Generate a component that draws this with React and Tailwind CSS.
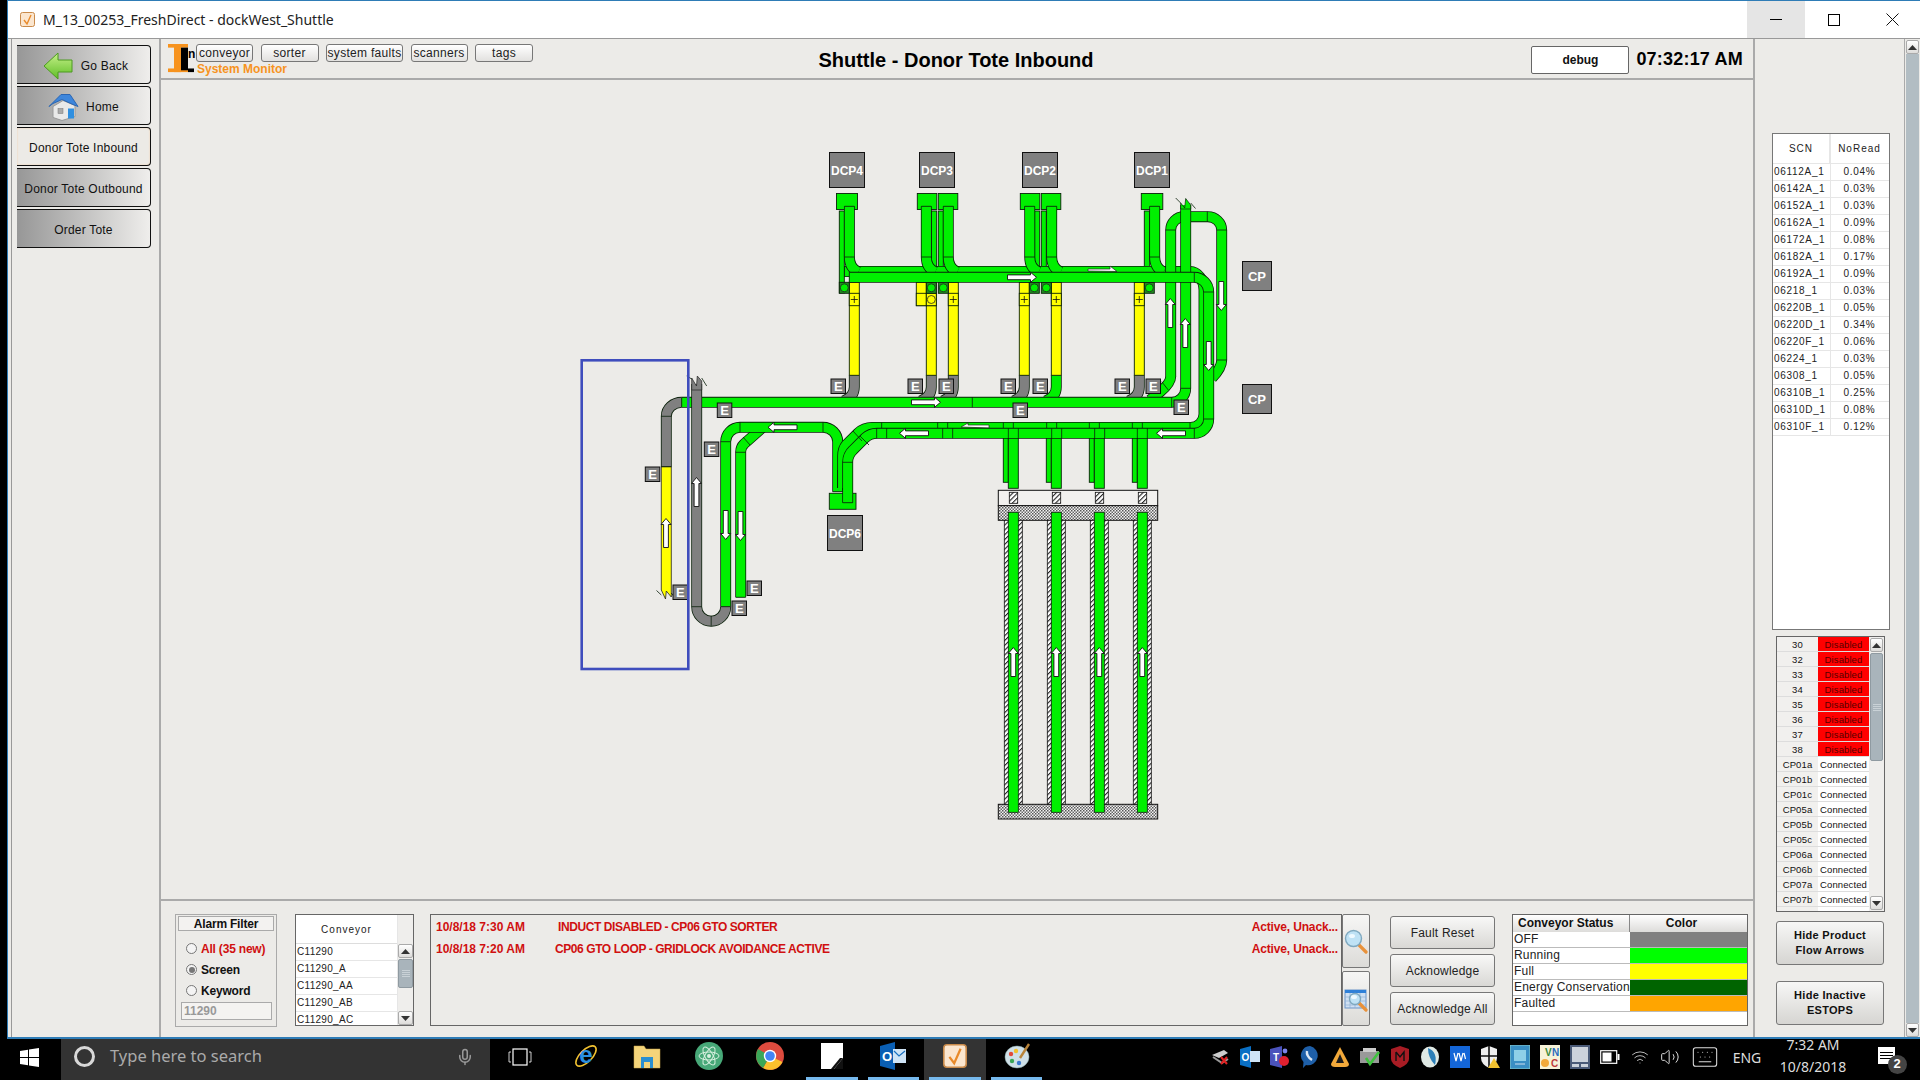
import { Mic, Wifi, Volume2, Keyboard } from 'lucide-react'

const GREEN = '#00f000'
const GRAY = '#808080'
const YELLOW = '#ffff00'
const DARK = '#228b22'

const scanRows = [
  ['06112A_1', '0.04%'], ['06142A_1', '0.03%'], ['06152A_1', '0.03%'], ['06162A_1', '0.09%'],
  ['06172A_1', '0.08%'], ['06182A_1', '0.17%'], ['06192A_1', '0.09%'], ['06218_1', '0.03%'],
  ['06220B_1', '0.05%'], ['06220D_1', '0.34%'], ['06220F_1', '0.06%'], ['06224_1', '0.03%'],
  ['06308_1', '0.05%'], ['06310B_1', '0.25%'], ['06310D_1', '0.08%'], ['06310F_1', '0.12%'],
]
const disabledRows = ['30', '32', '33', '34', '35', '36', '37', '38']
const connectedRows = ['CP01a', 'CP01b', 'CP01c', 'CP05a', 'CP05b', 'CP05c', 'CP06a', 'CP06b', 'CP07a', 'CP07b', 'CP08a']
const statusRows = [
  ['OFF', 'bg-[#808080]'], ['Running', 'bg-[#00ff00]'], ['Full', 'bg-[#ffff00]'],
  ['Energy Conservation', 'bg-[#006400]'], ['Faulted', 'bg-[#ffa500]'],
]

// ---- conveyor drawing helpers ----
function Belt({ d, color = GREEN, w = 10 }) {
  return (
    <>
      <path d={d} fill="none" stroke="#0a200a" strokeWidth={w + 0.9} />
      <path d={d} fill="none" stroke={color} strokeWidth={w - 0.7} />
    </>
  )
}

function Box({ x, y, w, h, fill = GREEN }) {
  return <rect x={x} y={y} width={w} height={h} fill={fill} stroke="#0a200a" strokeWidth="0.9" />
}

function Arrow({ x, y, rot = 0, len = 29 }) {
  const h = len / 2
  return (
    <polygon
      transform={`translate(${x} ${y}) rotate(${rot})`}
      points={`${-h},-2.4 ${h - 6},-2.4 ${h - 6},-5 ${h},0 ${h - 6},5 ${h - 6},2.4 ${-h},2.4`}
      fill="#fff"
      stroke="#111"
      strokeWidth="0.9"
    />
  )
}

function EBox({ x, y }) {
  return (
    <g>
      <rect x={x} y={y} width="14.5" height="14.5" fill={GRAY} stroke="#111" strokeWidth="1" />
      <text x={x + 7.25} y={y + 12} textAnchor="middle" fontSize="13" fill="#fff" fontWeight="700">E</text>
    </g>
  )
}

function Station({ x, y, label, size = 35 }) {
  return (
    <g>
      <rect x={x} y={y} width={size} height={size} fill={GRAY} stroke="#111" strokeWidth="1" />
      <text x={x + size / 2} y={y + size / 2 + 4.5} textAnchor="middle" fontSize={size === 35 ? 12 : 13} fill="#fff" fontWeight="700">{label}</text>
    </g>
  )
}

function Seps({ lines }) {
  return lines.map(([a, b, c, d], i) => (
    <line key={i} x1={a} y1={b} x2={c} y2={d} stroke="#0a200a" strokeWidth="0.8" />
  ))
}

const dcpCols = [
  { cx: 849.4, head: [836.5, 21], back: [839.3, 5] },
  { cx: 926.3, head: [917.3, 19.5], back: [931.3, 5.4] },
  { cx: 948.3, head: [938.3, 19.5], back: [938.3, 5] },
  { cx: 1029.7, head: [1020.3, 19.5], back: [1034.7, 5] },
  { cx: 1051.7, head: [1041.3, 19.5], back: [1041.3, 5] },
  { cx: 1154.7, head: [1141.3, 21.5], back: [1144.3, 5.4] },
]
const yellowCols = [854.3, 931.3, 953.3, 1024.3, 1056.3, 1139.3]
const shuttleCols = [1013.3, 1056.3, 1099.3, 1142.3]

function Diagram() {
  return (
    <svg viewBox="161 80 1594 819" className="block w-[1594px] h-[819px]">
      <defs>
        <pattern id="hatch" width="3.4" height="3.4" patternUnits="userSpaceOnUse" patternTransform="rotate(45)">
          <rect width="3.4" height="3.4" fill="#fff" />
          <rect width="1.1" height="3.4" fill="#222" />
        </pattern>
        <pattern id="dither" width="3" height="3" patternUnits="userSpaceOnUse">
          <rect width="3" height="3" fill="#f4f4f4" />
          <rect width="1.5" height="1.5" fill="#555" />
          <rect x="1.5" y="1.5" width="1.5" height="1.5" fill="#666" />
        </pattern>
      </defs>

      {/* far left loop */}
      <Belt d="M666.3 466.7 V416.3 A15.4 14 0 0 1 681.7 402.3" color={GRAY} />
      <path d="M661.3 466.7 H671.3 V590 L671.3 597 L666.3 591 L665.5 599 L661.3 590 Z" fill={YELLOW} stroke="#222" strokeWidth="0.8" />
      <Seps lines={[[656.5, 590.5, 661.3, 595], [671.3, 593, 676.5, 600], [661, 416.3, 671.6, 416.3], [661, 466.7, 671.6, 466.7]]} />

      {/* back columns for the lower rails */}
      <Belt d="M740.7 597.3 V452.3 A11 11 0 0 1 744 444 L762 428" />
      <Seps lines={[[735.7, 597.3, 745.7, 597.3], [735.7, 452.3, 745.7, 452.3], [743, 437, 750, 445]]} />
      <Belt d="M725.7 606.7 V441.7 A14.4 14.4 0 0 1 740 427.3 H823 A14.7 14.4 0 0 1 837.7 441.7 V491.7" />
      <Seps lines={[[720.7, 441.7, 730.7, 441.7], [740, 422.3, 740, 432.3], [823, 422.3, 823, 432.3], [832.7, 491.7, 842.7, 491.7]]} />
      <Arrow x={782.5} y={427.3} rot={180} />
      <Arrow x={725.7} y={525} rot={90} />
      <Arrow x={740.5} y={526} rot={90} />

      {/* back of the top rails */}
      {dcpCols.map((c, i) => (
        <Box key={i} x={c.back[0]} y="211" w={c.back[1]} h={i === 0 ? 82 : 58} />
      ))}
      <Belt d="M844.5 271.5 H1190 A14 19 0 0 1 1204 290 V414 A13.5 13.5 0 0 1 1190.5 427.5 H872 Q864 427.5 858 433 L846 445 Q842.7 449 842.7 456 V488" />
      <Seps lines={[
        [844.5, 266, 844.5, 277],
        ...[245, 413, 443, 610, 640, 740, 770, 868, 898, 997, 1027, 1170].map((z) => [800 + z / 3, 422.6, 800 + z / 3, 432]),
      ]} />
      <polygon points="1088,271 1088,269 1110,269 1110,266 1117,271.5" fill="#fff" stroke="#222" strokeWidth="0.7" />
      <polygon points="961,427 968,423 968,425 989,425 989,428" fill="#fff" stroke="#222" strokeWidth="0.7" />

      {/* DCP heads and drop columns */}
      {dcpCols.map((c, i) => (
        <g key={i}>
          <Box x={c.head[0]} y="193.5" w={c.head[1]} h="16" />
          <Belt d={`M${c.cx} 206.3 V257 Q${c.cx} 268 ${c.cx + 9} 272`} />
          <Seps lines={[[c.cx - 5, 206.3, c.cx + 5, 206.3], [c.cx - 5, 257, c.cx + 5, 257]]} />
        </g>
      ))}

      {/* yellow drops into the main rail */}
      {yellowCols.map((cx, i) => (
        <g key={i}>
          <Belt d={`M${cx} 375.3 V387 Q${cx} 397 ${cx - 11} 401`} color={i === 4 ? GREEN : GRAY} />
          <Box x={cx - 5} y="282.3" w="10" h="93" fill={YELLOW} />
          <Box x={cx - 5} y="293.3" w="10" h="12.4" fill={YELLOW} />
          <path d={`M${cx - 3.5} 299.5 H${cx + 3.5} M${cx} 296 V303`} stroke="#111" strokeWidth="0.8" />
        </g>
      ))}

      {/* photo eye blocks */}
      <Box x="916.3" y="282.3" w="10" h="23.4" fill={YELLOW} />
      <Box x="916.3" y="293.3" w="10" h="12.4" fill={YELLOW} />
      <Box x="926.3" y="293.3" w="10" h="12.4" fill={YELLOW} />
      <circle cx="931.3" cy="299.5" r="4" fill={YELLOW} stroke="#222" strokeWidth="0.8" />
      {[839.3, 926.3, 938.3, 1029.3, 1041.3, 1144.3].map((x) => (
        <g key={x}>
          <Box x={x} y="282.3" w="10" h="11" fill={DARK} />
          <circle cx={x + 5} cy="287.8" r="4" fill={GREEN} stroke="#222" strokeWidth="0.8" />
        </g>
      ))}

      {/* right hand loop */}
      <Belt d="M1221.7 360 Q1221.7 368 1212 378 M1170.7 376.7 Q1170.7 383 1160 392 L1150 400" />
      <Belt d="M1170.7 377 V230 A13.3 13.3 0 0 1 1184 216.7 H1207.7 A14 13.3 0 0 1 1221.7 230 V360" />
      <Seps lines={[[1165.7, 230, 1175.7, 230], [1207.3, 211.7, 1207.3, 221.7], [1216.7, 230, 1226.7, 230], [1216.7, 360, 1226.7, 360], [1161.7, 381.7, 1168.3, 390]]} />
      <Arrow x={1221.3} y={296} rot={90} />

      {/* main rail and the tall column */}
      <Belt d="M681.7 402.3 H1171.7 A14 14 0 0 0 1185.7 388.3 V205" />
      <path d="M1180.7 207 V203 L1184.7 208 L1185.7 198.5 L1190.7 205 V209 H1180.7 Z" fill={GREEN} stroke="#0a200a" strokeWidth="0.7" />
      <Seps lines={[[681.7, 397.3, 681.7, 407.3], [972.3, 397.3, 972.3, 407.3], [1171.7, 397.3, 1171.7, 407.3], [1180.7, 388.3, 1190.7, 388.3], [1175.7, 198, 1180.7, 203], [1190.7, 203, 1195.5, 208.5]]} />
      <Arrow x={926} y={402.3} />
      <Arrow x={1170.3} y={313} rot={-90} />
      <Arrow x={1185.3} y={333} rot={-90} />

      {/* lower shuttle drops */}
      {shuttleCols.map((cx) => (
        <g key={cx}>
          <Box x={cx - 10} y="436" w="5" h="46.3" />
          <Box x={cx - 5} y="436" w="10" h="52.3" />
        </g>
      ))}

      {/* front rail */}
      <Box x="829.3" y="493.3" w="26.7" h="16" />
      <Belt d="M842.7 470 V488" />
      <Belt d="M849.3 277.3 H1194 A14.7 14.7 0 0 1 1208.7 292 V419 A14.3 14.3 0 0 1 1194.4 433.3 H877 Q870 433.3 865 438 L853 450 Q847.7 455 847.7 462 V502.7" />
      <Seps lines={[
        [849.3, 272.3, 849.3, 282.3], [1194.3, 272.3, 1194.3, 282.3], [1203.7, 292, 1213.7, 292], [1203.7, 419, 1213.7, 419],
        [1194.3, 428.3, 1194.3, 438.3], [842.7, 462.3, 852.7, 462.3], [842.7, 502.7, 852.7, 502.7],
        [860, 436, 869, 445], [853, 431, 862, 441],
        ...[230, 260, 428, 458, 625, 655, 755, 785, 884, 914, 1012, 1042].map((z) => [800 + z / 3, 428.3, 800 + z / 3, 438.3]),
      ]} />
      <Arrow x={1022} y={277.3} />
      <Arrow x={1208.7} y={356} rot={90} />
      <Arrow x={1171} y={433.3} rot={180} />
      <Arrow x={914} y={433.3} rot={180} />

      {/* gray U-turn over the main rail */}
      <Belt d="M696.7 384 V606.7 A14.5 14.5 0 0 0 725.7 606.7" color={GRAY} />
      <path d="M691.7 378 L696.5 386 L697.3 376 L701.7 381 V390 H691.7 Z" fill={GRAY} stroke="#222" strokeWidth="0.7" />
      <Seps lines={[[686.7, 376, 691.7, 379], [701.7, 378, 706.7, 386], [691.7, 606.7, 701.7, 606.7], [720.7, 606.7, 730.7, 606.7], [711.2, 615.7, 711.2, 625.7]]} />
      <Arrow x={696.5} y={492} rot={-90} />
      <Arrow x={666} y={533} rot={-90} />

      {/* shuttle aisles */}
      <rect x="998.3" y="490.3" width="159.4" height="15.4" fill="#f2f1ef" stroke="#111" strokeWidth="1" />
      <rect x="998.3" y="505.7" width="159.4" height="14.6" fill="url(#dither)" stroke="#111" strokeWidth="1" />
      <rect x="998.3" y="804.3" width="159.4" height="14.7" fill="url(#dither)" stroke="#111" strokeWidth="1" />
      {shuttleCols.map((cx) => (
        <g key={cx}>
          <rect x={cx - 4} y="492.3" width="8.4" height="11" fill="url(#hatch)" stroke="#111" strokeWidth="0.8" />
          <rect x={cx - 9} y="520.3" width="18" height="284" fill="url(#hatch)" stroke="#111" strokeWidth="0.8" />
          <rect x={cx - 5} y="512.3" width="10" height="300" fill={GREEN} stroke="#0a200a" strokeWidth="0.8" />
          <Arrow x={cx} y={662} rot={-90} />
        </g>
      ))}

      {/* stations */}
      <Station x={829.5} y={152.5} label="DCP4" />
      <Station x={919.5} y={152.5} label="DCP3" />
      <Station x={1022.5} y={152.5} label="DCP2" />
      <Station x={1134.5} y={152.5} label="DCP1" />
      <Station x={827.5} y={515.5} label="DCP6" />
      <Station x={1242.5} y={261.5} label="CP" size={29} />
      <Station x={1242.5} y={384.5} label="CP" size={29} />

      {[
        [831, 379], [908, 379], [939, 379], [1001, 379], [1033, 379], [1115, 379], [1146, 379], [1013, 403], [1174, 400],
        [645.3, 467], [673, 585], [717.3, 403], [704.3, 442], [747, 581], [732, 601],
      ].map(([x, y]) => (
        <EBox key={`${x}-${y}`} x={x} y={y} />
      ))}

      {/* selection window */}
      <rect x="581.7" y="360.3" width="106.6" height="308.7" fill="none" stroke="#3f4dbd" strokeWidth="2.6" />
    </svg>
  )
}

// ---- small widgets ----
function Tri({ up, className = 'fill-[#333]' }) {
  return (
    <svg width="9" height="5" viewBox="0 0 9 5" className={className}>
      <polygon points={up ? '4.5,0 9,5 0,5' : '0,0 9,0 4.5,5'} />
    </svg>
  )
}

function ScrollBtn({ up, h = 'h-[14px]' }) {
  return (
    <div className={`${h} w-full shrink-0 flex items-center justify-center bg-linear-to-b from-white to-[#dddcda] border border-[#aaa] rounded-[2px]`}>
      <Tri up={up} />
    </div>
  )
}

function Thumb({ h }) {
  return (
    <div className={`${h} mt-[1px] w-full shrink-0 rounded-[2px] bg-[#a9b4bb] border border-[#8f9aa1] flex flex-col items-center justify-center gap-[1px]`}>
      <div className="w-[8px] h-[1px] bg-[#c9d1d6]" />
      <div className="w-[8px] h-[1px] bg-[#c9d1d6]" />
      <div className="w-[8px] h-[1px] bg-[#c9d1d6]" />
      <div className="w-[8px] h-[1px] bg-[#c9d1d6]" />
    </div>
  )
}

function NavButton({ children, active }) {
  return (
    <div className={`h-[39px] w-[134px] pt-[2px] flex items-center justify-center gap-[7px] rounded-r-[4px] text-[12px] tracking-[0.2px] text-[#111] ${active ? 'bg-[#eceae6] border-y border-r border-y-[#111] border-r-[#111] shadow-[inset_0_0_2px_#f4cfa8]' : 'bg-linear-to-r from-[#979797] to-[#efeeec] border-y border-r border-[#111]'}`}>
      {children}
    </div>
  )
}

function TopTab({ label, w }) {
  return (
    <div className={`${w} h-[18px] flex items-center justify-center rounded-[3px] border border-[#777] bg-linear-to-b from-white to-[#e2e1df] text-[12px] tracking-[0.3px] text-[#222]`}>
      {label}
    </div>
  )
}

function Radio({ on, label, red }) {
  return (
    <div className="h-[21px] flex items-center gap-[4px]">
      <span className="w-[11px] h-[11px] rounded-full border border-[#777] bg-[#f4f4f4] flex items-center justify-center">
        {on && <span className="w-[6px] h-[6px] rounded-full bg-[#777]" />}
      </span>
      <span className={`text-[12px] font-bold tracking-[-0.2px] ${red ? 'text-[#d01010]' : 'text-[#111]'}`}>{label}</span>
    </div>
  )
}

function ActionButton({ label }) {
  return (
    <div className="h-[33px] w-[105px] flex items-center justify-center rounded-[3px] border border-[#777] bg-linear-to-b from-[#f8f8f7] to-[#d9d8d5] text-[12px] tracking-[0.2px] text-[#222]">
      {label}
    </div>
  )
}

function HideButton({ children }) {
  return (
    <div className="h-[44px] w-[108px] flex items-center justify-center text-center rounded-[3px] border border-[#777] bg-linear-to-b from-[#f7f7f6] to-[#d6d5d2] text-[11px] leading-[15px] tracking-[0.3px] font-bold text-[#111]">
      {children}
    </div>
  )
}

function Magnifier({ calendar }) {
  return (
    <svg width="24" height="26" viewBox="0 0 24 26">
      {calendar && (
        <g>
          <rect x="1" y="4" width="21" height="18" fill="#cfe0f2" stroke="#6a94c8" />
          <rect x="1" y="4" width="21" height="3" fill="#2f80d8" />
          <path d="M1 11H22M1 15H22M1 19H22M6 7V22M11 7V22M16 7V22" stroke="#8fb0d6" strokeWidth="0.7" />
        </g>
      )}
      <line x1={calendar ? 15 : 14} y1={calendar ? 17 : 16} x2="22" y2="24" stroke="#e8913a" strokeWidth="3.2" strokeLinecap="round" />
      <circle cx={calendar ? 11 : 9.5} cy={calendar ? 13 : 10.5} r={calendar ? 5.5 : 8} fill="#bfe2f5" stroke="#7fa8bf" strokeWidth="1.4" />
      <ellipse cx={calendar ? 10 : 8} cy={calendar ? 11 : 8} rx="3" ry="2" fill="#eef9ff" />
    </svg>
  )
}

function GoBackIcon() {
  return (
    <svg width="30" height="28" viewBox="0 0 30 28" className="ml-[4px]">
      <defs>
        <linearGradient id="back" x1="0" y1="0" x2="0" y2="1">
          <stop offset="0" stopColor="#c6f08a" />
          <stop offset="1" stopColor="#5fbe26" />
        </linearGradient>
      </defs>
      <polygon points="1,14 15,1 15,8 29,8 29,20 15,20 15,27" fill="url(#back)" stroke="#4d9a20" />
    </svg>
  )
}

function HomeIcon() {
  return (
    <svg width="31" height="28" viewBox="0 0 31 27">
      <polygon points="5,13 5,24 14,27 27,23 27,12 15,7" fill="#e9e9e9" stroke="#999" />
      <polygon points="1,13 13,1 22,1 30,13 25,11 14,6 5,10" fill="#3d86dc" stroke="#2a66b4" />
      <rect x="20" y="15" width="6" height="10" fill="#2f8fe0" />
      <rect x="10" y="15" width="5" height="5" fill="#aaa" stroke="#777" strokeWidth="0.5" />
    </svg>
  )
}

function AppIcon({ size = 15 }) {
  return (
    <svg width={size} height={size} viewBox="0 0 15 15">
      <rect x="0.5" y="0.5" width="14" height="14" rx="2" fill="#fbe6cf" stroke="#c98a4a" />
      <path d="M4 8 L7 12 L11 3" fill="none" stroke="#e98a2a" strokeWidth="1.4" />
    </svg>
  )
}

function TaskApp({ children, open, active }) {
  return (
    <div className={`w-[61.5px] h-full flex flex-col ${active ? 'bg-[#333]' : ''}`}>
      <div className="flex-1 flex items-center justify-center pb-[5px]">{children}</div>
      <div className={`h-[3px] mx-[5px] ${open ? 'bg-[#76b9ed]' : ''}`} />
    </div>
  )
}

function Tray({ children }) {
  return <div className="w-[30px] flex items-center justify-center pb-[5px]">{children}</div>
}

function Taskbar() {
  return (
    <div className="h-[41px] bg-black flex items-stretch overflow-hidden text-white">
      <div className="w-[61px] flex items-center justify-center pr-[2px] pb-[5px]">
        <svg width="19" height="19" viewBox="0 0 19 19" fill="#fff">
          <polygon points="0,3 8,1.8 8,9 0,9" /><polygon points="9,1.6 19,0 19,9 9,9" />
          <polygon points="0,10 8,10 8,17.2 0,16" /><polygon points="9,10 19,10 19,19 9,17.4" />
        </svg>
      </div>
      <div className="w-[429px] bg-[#333] flex items-center pb-[6px]">
        <span className="ml-[13px] w-[21px] h-[21px] rounded-full border-[3px] border-[#d8d8d8]" />
        <span className="ml-[15px] text-[16.5px] text-[#aaa] font-['Noto_Sans']">Type here to search</span>
        <Mic className="ml-auto mr-[16px] text-[#999]" size={18} />
      </div>
      <div className="w-[65px] flex items-center justify-center pr-[6px] pb-[5px]">
        <svg width="24" height="18" viewBox="0 0 24 18" fill="none" stroke="#fff" strokeWidth="1.2">
          <rect x="5" y="1" width="14" height="16" /><path d="M3 4H1V14H3M21 4H23V14H21" strokeWidth="0.8" />
        </svg>
      </div>
      <TaskApp>
        <svg width="26" height="28" viewBox="0 0 26 28">
          <ellipse cx="13" cy="14" rx="13" ry="6" transform="rotate(-45 13 14)" fill="none" stroke="#f2c230" strokeWidth="1.6" />
          <text x="13" y="21" textAnchor="middle" fontSize="24" fontWeight="700" fill="#2a8fe0" fontFamily="Liberation Sans">e</text>
        </svg>
      </TaskApp>
      <TaskApp>
        <svg width="28" height="26" viewBox="0 0 28 26">
          <path d="M1 3H11L13 6H27V25H1Z" fill="#f4d47a" stroke="#c9a64a" strokeWidth="0.5" />
          <rect x="8" y="14" width="12" height="11" fill="#2a8fd0" /><rect x="11" y="19" width="6" height="6" fill="#f4d47a" />
        </svg>
      </TaskApp>
      <TaskApp>
        <svg width="28" height="28" viewBox="0 0 28 28">
          <circle cx="14" cy="14" r="14" fill="#47a878" />
          <g fill="none" stroke="#d8f0e0" strokeWidth="1">
            <ellipse cx="14" cy="14" rx="10" ry="4" /><ellipse cx="14" cy="14" rx="10" ry="4" transform="rotate(60 14 14)" /><ellipse cx="14" cy="14" rx="10" ry="4" transform="rotate(120 14 14)" />
          </g>
          <circle cx="14" cy="14" r="2" fill="#d8f0e0" />
        </svg>
      </TaskApp>
      <TaskApp>
        <svg width="28" height="28" viewBox="0 0 28 28">
          <circle cx="14" cy="14" r="14" fill="#dd4b3e" />
          <path d="M14 14 L26.5 20 A14 14 0 0 1 7 26 Z" fill="#fbc02d" />
          <path d="M14 14 L7 26 A14 14 0 0 1 2 7 Z" fill="#3aa757" />
          <circle cx="14" cy="14" r="6.2" fill="#fff" /><circle cx="14" cy="14" r="4.8" fill="#4285f4" />
        </svg>
      </TaskApp>
      <TaskApp open>
        <svg width="22" height="26" viewBox="0 0 22 26">
          <rect width="22" height="26" fill="#fff" /><polygon points="22,15 22,26 13,26" fill="#111" /><polygon points="10,26 19,15 22,15 13,26" fill="#111" />
        </svg>
      </TaskApp>
      <TaskApp open>
        <svg width="26" height="28" viewBox="0 0 26 28">
          <polygon points="0,4 15,0 15,28 0,24" fill="#0a5fb4" /><rect x="13" y="7" width="13" height="14" fill="#cfe4f6" />
          <path d="M14 9 L19 14 L25 9" fill="none" stroke="#1a70c0" strokeWidth="1.2" />
          <text x="7" y="19" textAnchor="middle" fontSize="13" fontWeight="700" fill="#fff" fontFamily="Liberation Sans">O</text>
        </svg>
      </TaskApp>
      <TaskApp open active><AppIcon size={24} /></TaskApp>
      <TaskApp open>
        <svg width="28" height="28" viewBox="0 0 28 28" className="ml-[3px]">
          <ellipse cx="13" cy="15" rx="12" ry="11" fill="#cfe0e8" stroke="#8aa" strokeWidth="0.5" />
          <circle cx="7" cy="12" r="2.2" fill="#e04a3a" /><circle cx="12" cy="9" r="2.2" fill="#f2c230" /><circle cx="8" cy="19" r="2.2" fill="#3aa757" /><circle cx="15" cy="21" r="2.2" fill="#3a7ad0" />
          <line x1="16" y1="16" x2="25" y2="2" stroke="#b8843a" strokeWidth="2.4" />
        </svg>
      </TaskApp>

      <div className="ml-auto flex items-stretch">
        <Tray>
          <svg width="20" height="18" viewBox="0 0 20 18"><path d="M2 7 L14 2 L18 5 L9 10 Z" fill="#ccc" /><path d="M3 9 L12 15 L18 11" fill="none" stroke="#999" strokeWidth="2" /><path d="M11 9 L17 16 M17 9 L11 16" stroke="#e02020" strokeWidth="2" /></svg>
        </Tray>
        <Tray>
          <svg width="20" height="22" viewBox="0 0 20 22"><polygon points="0,3 11,0 11,22 0,19" fill="#0a6fc4" /><rect x="10" y="5" width="10" height="11" fill="#cfe4f6" /><text x="5.5" y="15" textAnchor="middle" fontSize="10" fontWeight="700" fill="#fff" fontFamily="Liberation Sans">O</text></svg>
        </Tray>
        <Tray>
          <svg width="20" height="22" viewBox="0 0 20 22"><polygon points="0,3 12,0 12,22 0,19" fill="#4b53bc" /><text x="6" y="15" textAnchor="middle" fontSize="10" fontWeight="700" fill="#fff" fontFamily="Liberation Sans">T</text><circle cx="14" cy="15" r="5" fill="#e02030" /><circle cx="15" cy="5" r="2.4" fill="#7b83eb" /></svg>
        </Tray>
        <Tray>
          <svg width="20" height="24" viewBox="0 0 20 24"><path d="M10 1 A9.5 9.5 0 1 1 6 20 L3 23 L3.5 17 A9.5 9.5 0 0 1 10 1 Z" fill="#1e5fa8" /><path d="M7 6 Q6 11 12 15" fill="none" stroke="#dce8f5" strokeWidth="2.4" /></svg>
        </Tray>
        <Tray>
          <svg width="20" height="22" viewBox="0 0 20 22"><path d="M10 1 L19 18 Q19 21 15 21 H5 Q1 21 1 18 Z" fill="#f2a93a" /><path d="M10 8 L14 17 H6 Z" fill="#1a1a1a" /></svg>
        </Tray>
        <Tray>
          <svg width="22" height="20" viewBox="0 0 22 20"><rect x="1" y="4" width="19" height="12" fill="#999" /><rect x="4" y="1" width="13" height="4" fill="#ccc" /><path d="M7 11 L11 17 L20 5" fill="none" stroke="#3fc23f" strokeWidth="2.6" /></svg>
        </Tray>
        <Tray>
          <svg width="20" height="22" viewBox="0 0 20 22"><path d="M1 3 L10 0 L19 3 V13 Q19 18 10 22 Q1 18 1 13 Z" fill="#a81c24" /><path d="M6 6 L10 11 L14 6 V15 M6 6 V15" fill="none" stroke="#111" strokeWidth="1.4" /></svg>
        </Tray>
        <Tray>
          <svg width="20" height="22" viewBox="0 0 20 22"><ellipse cx="10" cy="11" rx="9" ry="10.5" fill="#dfe9e4" /><path d="M8 2 Q18 6 15 19 Q8 12 8 2 Z" fill="#2b7fb8" /></svg>
        </Tray>
        <Tray>
          <svg width="20" height="22" viewBox="0 0 20 22"><rect width="20" height="22" fill="#1466d8" /><path d="M4 7 L6 15 L8 7 M9 7 L11 15 L13 7 M14 7 L15.5 13" fill="none" stroke="#fff" strokeWidth="1.2" /></svg>
        </Tray>
        <Tray>
          <svg width="20" height="22" viewBox="0 0 20 22"><path d="M1 3 L9 0 L17 3 V12 Q17 18 9 22 Q1 18 1 12 Z" fill="#eee" /><path d="M9 0 V22 M1 10 H17" stroke="#111" strokeWidth="1.6" /><polygon points="14,12 20,22 8,22" fill="#f2c230" /></svg>
        </Tray>
        <Tray>
          <svg width="20" height="24" viewBox="0 0 20 24"><rect width="20" height="24" fill="#3a8fc4" stroke="#8cc" /><rect x="4" y="5" width="12" height="11" fill="#8fd0e8" /><path d="M5 19 H15" stroke="#cde" /></svg>
        </Tray>
        <Tray>
          <svg width="20" height="24" viewBox="0 0 20 24"><rect width="20" height="24" fill="#f6f2d8" /><text x="5" y="11" fontSize="10" fontWeight="700" fill="#3a8a3a" fontFamily="Liberation Sans">V</text><text x="12" y="11" fontSize="10" fontWeight="700" fill="#2a6ac0" fontFamily="Liberation Sans">N</text><text x="11" y="22" fontSize="10" fontWeight="700" fill="#c03a3a" fontFamily="Liberation Sans">C</text><circle cx="5" cy="18" r="4" fill="#f2a93a" /></svg>
        </Tray>
        <Tray>
          <svg width="20" height="24" viewBox="0 0 20 24"><rect width="20" height="24" fill="#4a5a78" /><rect x="2" y="2" width="16" height="15" fill="#ccd2dc" /><rect x="2" y="19" width="7" height="3" fill="#ccd2dc" /><rect x="11" y="19" width="7" height="3" fill="#ccd2dc" /></svg>
        </Tray>
        <Tray>
          <svg width="20" height="14" viewBox="0 0 20 14"><rect x="0.7" y="0.7" width="16" height="12.6" fill="none" stroke="#fff" strokeWidth="1.2" /><rect x="2.5" y="2.5" width="9" height="9" fill="#fff" /><rect x="17.5" y="4" width="2" height="6" fill="#fff" /></svg>
        </Tray>
        <Tray><Wifi className="text-[#ccc]" size={18} strokeWidth={1.2} /></Tray>
        <Tray><Volume2 className="text-[#ddd]" size={20} strokeWidth={1.2} /></Tray>
        <div className="w-[39px] flex items-center justify-center pb-[5px]"><Keyboard className="text-[#ddd]" size={28} strokeWidth={0.9} /></div>
        <div className="w-[46px] flex items-center justify-center pb-[5px] text-[14px] text-[#ddd] font-['Noto_Sans']">ENG</div>
        <div className="w-[86px] flex flex-col items-center justify-end pb-[2px] text-[14px] leading-[22px] text-[#ddd] font-['Noto_Sans']">
          <div>7:32 AM</div>
          <div>10/8/2018</div>
        </div>
        <div className="w-[64px] flex items-center justify-center pb-[9px] pr-[4px]">
          <div className="relative w-[17px] h-[17px] bg-white flex flex-col justify-center gap-[2px] px-[2px]">
            <div className="h-[1px] bg-black" /><div className="h-[1px] bg-black" /><div className="h-[1px] bg-black" />
            <span className="absolute -right-[12px] top-[8px] w-[19px] h-[19px] rounded-full bg-[#444] flex items-center justify-center text-[13px] font-bold">2</span>
          </div>
        </div>
      </div>
    </div>
  )
}

export default function App() {
  return (
    <div className="w-[1920px] h-[1080px] overflow-hidden bg-black flex flex-col font-['Liberation_Sans',sans-serif]">
      <div className="h-[1039px] flex">
        <div className="w-[7px] bg-black" />
        <div className="flex-1 min-w-0 flex flex-col bg-[#ecebe8] border-l border-t border-b-2 border-[#2e7cb6]">
          {/* title bar */}
          <div className="h-[38px] bg-white flex items-center shrink-0 border-b border-[#999]">
            <div className="ml-[12px]"><AppIcon /></div>
            <span className="ml-[8px] text-[14px] text-[#222] font-['Noto_Sans']">M_13_00253_FreshDirect - dockWest_Shuttle</span>
            <div className="ml-auto flex h-full">
              <div className="w-[58px] bg-[#e5e5e5] flex items-center justify-center">
                <div className="w-[12px] h-[1px] bg-black" />
              </div>
              <div className="w-[58px] flex items-center justify-center">
                <div className="w-[12px] h-[12px] border border-black" />
              </div>
              <div className="w-[57px] flex items-center justify-center pl-[2px]">
                <svg width="13" height="13" viewBox="0 0 13 13" stroke="#111"><path d="M0.5 0.5L12.5 12.5M12.5 0.5L0.5 12.5" /></svg>
              </div>
            </div>
          </div>

          <div className="flex-1 min-h-0 flex">
            {/* left nav */}
            <div className="w-[153px] shrink-0 border-r-2 border-[#aaa]">
              <div className="h-full ml-[3px] border-l border-[#999] pl-[5px] pt-[6px] flex flex-col gap-[2px]">
                <NavButton><GoBackIcon /><span className="ml-[1px]">Go Back</span></NavButton>
                <NavButton><HomeIcon /><span>Home</span></NavButton>
                <NavButton active>Donor Tote Inbound</NavButton>
                <NavButton>Donor Tote Outbound</NavButton>
                <NavButton>Order Tote</NavButton>
              </div>
            </div>

            {/* center column */}
            <div className="w-[1594px] shrink-0 flex flex-col border-r-2 border-[#aaa]">
              <div className="h-[41px] shrink-0 pt-[2px] grid grid-cols-[1fr_auto_1fr] items-center border-b-2 border-[#aaa]">
                <div className="flex items-start pl-[7px] pt-[3px] h-full">
                  <div className="relative w-[28px] h-[30px]">
                    <svg width="28" height="29" viewBox="0 0 28 32" preserveAspectRatio="none">
                      <rect x="0" y="0" width="20" height="4" fill="#f7931e" />
                      <rect x="0" y="27" width="20" height="4" fill="#f7931e" />
                      <rect x="6" y="0" width="7" height="31" fill="#f7931e" />
                      <rect x="13" y="4" width="7" height="25" fill="#000" />
                      <rect x="20" y="27" width="6" height="4" fill="#000" />
                    </svg>
                    <span className="absolute left-[20px] top-[3px] text-[12px] font-bold leading-[14px] text-black">n</span>
                  </div>
                  <div className="flex flex-col">
                    <div className="flex gap-[7.5px]">
                      <TopTab label="conveyor" w="w-[57px]" />
                      <TopTab label="sorter" w="w-[58px]" />
                      <TopTab label="system faults" w="w-[77px]" />
                      <TopTab label="scanners" w="w-[57px]" />
                      <TopTab label="tags" w="w-[58px]" />
                    </div>
                    <span className="ml-[1px] text-[12px] font-bold leading-[12px] mt-[1px] text-[#f7931e]">System Monitor</span>
                  </div>
                </div>
                <div className="text-[20px] font-bold text-black mr-[2px]">Shuttle - Donor Tote Inbound</div>
                <div className="flex items-center justify-end pr-[10px]">
                  <div className="w-[98px] h-[28px] flex items-center justify-center bg-white border border-[#666] rounded-[2px] text-[12px] font-bold text-[#111]">debug</div>
                  <span className="ml-[7px] text-[18px] font-bold tracking-[0.2px] text-black whitespace-nowrap">07:32:17 AM</span>
                </div>
              </div>

              <div className="flex-1 min-h-0 border-b-2 border-[#aaa]">
                <Diagram />
              </div>

              {/* bottom alarm strip */}
              <div className="h-[136px] shrink-0 flex pt-[13px]">
                <div className="ml-[14px] w-[102px] h-[113px] border border-[#aaa] px-[2px] pt-[1px]">
                  <div className="h-[15px] border border-[#aaa] bg-[#f3f2f0] flex items-center justify-center text-[12px] font-bold tracking-[-0.2px] text-[#111]">Alarm Filter</div>
                  <div className="pl-[8px] mt-[7px]">
                    <Radio label="All (35 new)" red />
                    <Radio on label="Screen" />
                    <Radio label="Keyword" />
                  </div>
                  <div className="ml-[3px] mt-[1px] w-[91px] h-[18px] border border-[#aaa] bg-[#f4f3f1] pl-[2px] text-[12px] font-bold leading-[16px] text-[#999]">11290</div>
                </div>

                <div className="ml-[18px] w-[119px] h-[112px] border border-[#666] bg-white flex text-[10px] tracking-[0.3px] text-[#222]">
                  <div className="w-[102px] overflow-hidden border-r border-[#e6e6e6]">
                    <div className="h-[29px] flex items-center justify-center border-b border-[#ddd] tracking-[1px]">Conveyor</div>
                    {['C11290', 'C11290_A', 'C11290_AA', 'C11290_AB', 'C11290_AC'].map((c) => (
                      <div key={c} className="h-[17px] leading-[16px] pl-[1px] border-b border-[#e6e6e6] whitespace-nowrap">{c}</div>
                    ))}
                  </div>
                  <div className="flex-1 pt-[29px] flex flex-col bg-[#efeeec]">
                    <ScrollBtn up />
                    <Thumb h="h-[29px]" />
                    <div className="flex-1" />
                    <ScrollBtn />
                  </div>
                </div>

                <div className="ml-[16px] w-[912px] h-[112px] border border-[#666] pt-[1px] pl-[5px] pr-[3px] text-[12px] font-bold text-[#d01010]">
                  <div className="h-[22px] flex items-center">
                    <span className="w-[122px]">10/8/18 7:30 AM</span>
                    <span className="tracking-[-0.42px]">INDUCT DISABLED - CP06 GTO SORTER</span>
                    <span className="ml-auto tracking-[-0.15px]">Active, Unack...</span>
                  </div>
                  <div className="h-[22px] flex items-center">
                    <span className="w-[119px]">10/8/18 7:20 AM</span>
                    <span className="tracking-[-0.42px]">CP06 GTO LOOP - GRIDLOCK AVOIDANCE ACTIVE</span>
                    <span className="ml-auto tracking-[-0.15px]">Active, Unack...</span>
                  </div>
                </div>
                <div className="w-[28px] h-[112px] flex flex-col justify-between">
                  <div className="h-[54px] flex items-center justify-center rounded-[2px] border border-[#777] bg-linear-to-b from-[#f6f6f5] to-[#dcdbd8]"><Magnifier /></div>
                  <div className="h-[55px] flex items-center justify-center rounded-[2px] border border-[#777] bg-linear-to-b from-[#f6f6f5] to-[#dcdbd8]"><Magnifier calendar /></div>
                </div>

                <div className="ml-[20px] w-[105px] pt-[2px] flex flex-col gap-[5px]">
                  <ActionButton label="Fault Reset" />
                  <ActionButton label="Acknowledge" />
                  <ActionButton label="Acknowledge All" />
                </div>

                <div className="ml-[17px] w-[236px] h-[112px] border border-[#666] bg-white">
                  <div className="h-[17px] flex text-[12px] font-bold leading-[16px] text-[#111]">
                    <div className="w-[117px] pl-[5px] border-r border-[#888] bg-linear-to-b from-white to-[#dddcda]">Conveyor Status</div>
                    <div className="flex-1 text-center pr-[14px] bg-linear-to-b from-white to-[#dddcda]">Color</div>
                  </div>
                  {statusRows.map(([label, color]) => (
                    <div key={label} className="h-[16px] flex text-[12px] tracking-[0.2px] leading-[15px] text-[#222]">
                      <div className="w-[117px] pl-[1px] border-b border-[#bbb] whitespace-nowrap">{label}</div>
                      <div className={`flex-1 border-b border-[#bbb] ${color}`} />
                    </div>
                  ))}
                </div>
              </div>
            </div>

            {/* right side panel */}
            <div className="w-[149px] shrink-0 flex flex-col pt-[94px] pl-[17px]">
              <div className="w-[118px] h-[497px] shrink-0 border border-[#777] bg-white text-[10px] tracking-[0.7px] text-[#222]">
                <div className="h-[30px] flex border-b border-[#e6e6e6]">
                  <div className="w-[58px] flex items-center justify-center border-r-2 border-[#e6e6e6] tracking-[1px]">SCN</div>
                  <div className="w-[57px] flex items-center justify-center tracking-[1px]">NoRead</div>
                </div>
                {scanRows.map(([scn, pct]) => (
                  <div key={scn} className="h-[17px] flex leading-[16px] border-b border-[#e6e6e6] whitespace-nowrap">
                    <div className="w-[58px] pl-[1px] border-r border-[#e6e6e6] overflow-hidden">{scn}</div>
                    <div className="w-[57px] text-center">{pct}</div>
                  </div>
                ))}
              </div>

              <div className="mt-[6px] ml-[4px] w-[109px] h-[276px] shrink-0 border border-[#666] bg-white flex overflow-hidden text-[9.5px] tracking-[0.1px] text-[#111]">
                <div className="w-[92px] shrink-0 overflow-hidden">
                  {disabledRows.map((n) => (
                    <div key={n} className="h-[15px] flex leading-[15px] border-b border-[#ddd]">
                      <div className="w-[41px] text-center bg-[#f1f0ee]">{n}</div>
                      <div className="flex-1 text-center bg-[#ff0000] text-[#560000]">Disabled</div>
                    </div>
                  ))}
                  {connectedRows.map((n) => (
                    <div key={n} className="h-[15px] flex leading-[15px] border-b border-[#ddd]">
                      <div className="w-[41px] text-center bg-[#f1f0ee]">{n}</div>
                      <div className="flex-1 text-center">Connected</div>
                    </div>
                  ))}
                </div>
                <div className="flex-1 flex flex-col bg-[#efeeec] p-[1px]">
                  <ScrollBtn up />
                  <Thumb h="h-[108px]" />
                  <div className="flex-1" />
                  <ScrollBtn />
                </div>
              </div>

              <div className="mt-[9px] ml-[4px] flex flex-col gap-[16px]">
                <HideButton>Hide Product<br />Flow Arrows</HideButton>
                <HideButton>Hide Inactive<br />ESTOPS</HideButton>
              </div>
            </div>

            {/* page scrollbar */}
            <div className="flex-1 flex flex-col border-l border-[#aaa] px-[1px] pt-[1px]">
              <ScrollBtn up />
              <div className="flex-1 bg-[#b2bdc3]" />
              <ScrollBtn />
            </div>
          </div>
        </div>
      </div>
      <Taskbar />
    </div>
  )
}
